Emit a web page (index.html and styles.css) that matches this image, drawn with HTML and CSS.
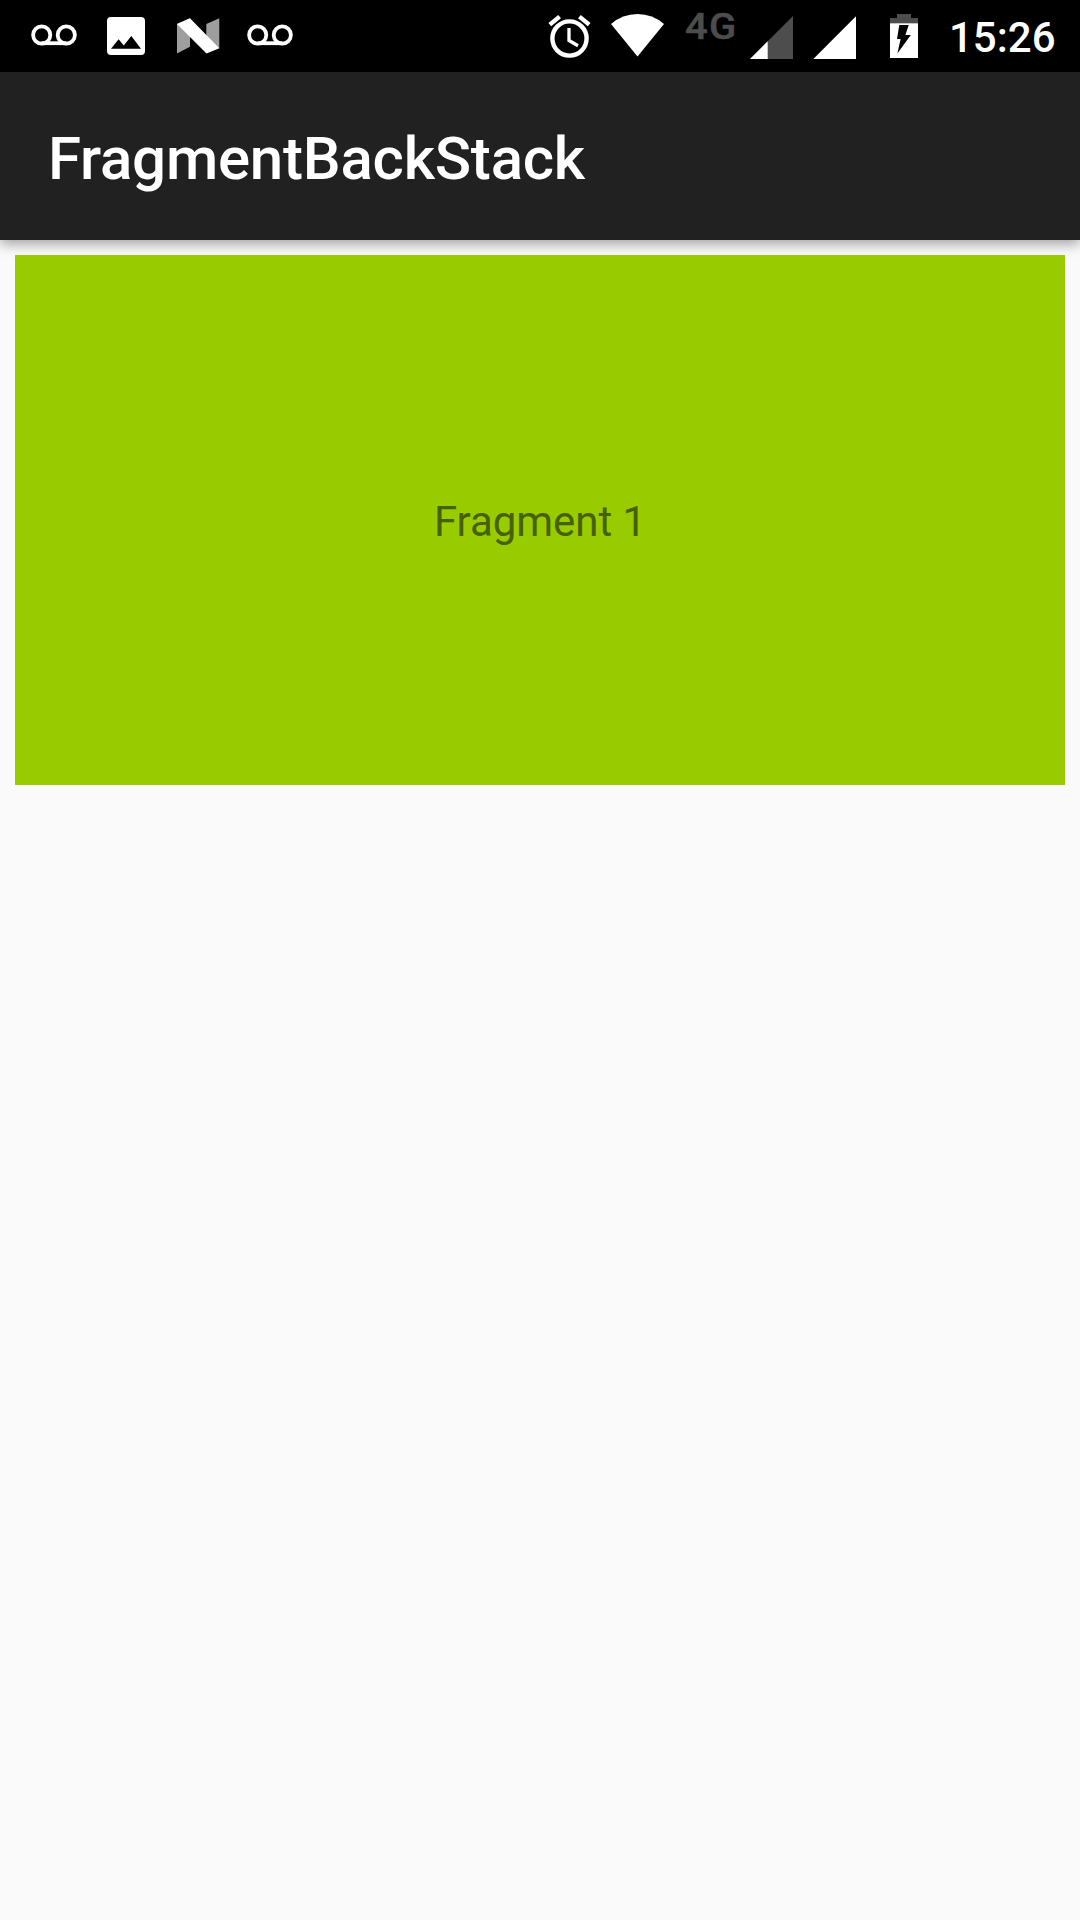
FILE: index.html
```html
<!DOCTYPE html>
<html lang="en">
<head>
<meta charset="utf-8">
<title>FragmentBackStack</title>
<link rel="stylesheet" href="styles.css">
</head>
<body>
<header class="status-bar">
  <div class="notifications">
    <svg class="icon" viewBox="18 0 72 72"><g class="tape"><circle cx="41.7" cy="35" r="8.6"/><circle cx="66.3" cy="35" r="8.6"/><path d="M41.7 43.2h24.6"/></g></svg>
    <svg class="icon" viewBox="90 0 72 72"><path fill-rule="evenodd" d="M111 17h30q4 0 4 4v30q0 4-4 4h-30q-4 0-4-4V21q0-4 4-4zM111 48.7h30l-9.7-12.6-7.5 9.4-5.2-6.3z"/></svg>
    <svg class="icon" viewBox="162 0 72 72"><path class="n-side" d="M177 24l13-5.7v28.5l-13 6.7zM206.3 24l13-5.7v30l-13-7z"/><path d="M177 24l13-5.7 29.3 30-12.8 5.2z"/></svg>
    <svg class="icon" viewBox="234 0 72 72"><g class="tape"><circle cx="257.7" cy="35" r="8.6"/><circle cx="282.3" cy="35" r="8.6"/><path d="M257.7 43.2h24.6"/></g></svg>
  </div>
  <div class="system">
    <svg class="alarm" viewBox="544 0 52 72"><circle cx="569.5" cy="38.5" r="17.1"/><path d="M569 28v12.5l9 5.2" class="hands"/><path d="M549.8 24.6l9.8-8M589.2 24.6l-9.8-8"/></svg>
    <svg class="wifi" viewBox="608 0 60 72"><path d="M611 24Q622.5 14 637.5 14T664 24L637.5 56.5z"/></svg>
    <span class="network">4G</span>
    <svg class="signal" viewBox="749 0 46 72"><path class="dim" d="M750 59l43-43v43z"/><path d="M750 59l17.7-17.7V59z"/></svg>
    <svg class="signal" viewBox="812 0 46 72"><path d="M813.3 59l42.7-42.7v42.7z"/></svg>
    <svg class="battery" viewBox="888 0 32 72"><path class="dim" d="M897 14h14v4h7v5.3h-28V18h7z"/><path fill-rule="evenodd" d="M890 23.3h28V58h-28zM899.3 25l-2.3 14h3.6l-3.2 14.5L910.8 35h-5.4l3.3-10z"/></svg>
    <time class="clock">15:26</time>
  </div>
</header>
<div class="app-bar"><h1 class="title">FragmentBackStack</h1></div>
<main class="content">
  <section class="fragment">Fragment 1</section>
</main>
</body>
</html>
```
FILE: styles.css
```css
body {
  display: flex;
  flex-direction: column;
  height: 1920px;
  margin: 0;
  background: #fafafa;
  font-family: Roboto, sans-serif;
}

.status-bar {
  display: flex;
  justify-content: space-between;
  height: 72px;
  padding: 0 24px 0 18px;
  background: #000;
  color: #fff;
}

.notifications,
.system {
  display: flex;
}

svg {
  display: block;
  height: 72px;
  fill: #fff;
}

.icon {
  width: 72px;
}

.tape {
  fill: none;
  stroke: #fff;
  stroke-width: 3.8;
}

.n-side {
  fill: #9e9e9e;
}

.alarm {
  width: 52px;
  margin-right: 12px;
  fill: none;
  stroke: #fff;
  stroke-width: 4.4;
}

.hands {
  stroke-width: 3.3;
}

.wifi {
  width: 60px;
  margin-right: 17px;
}

.network {
  width: 64px;
  color: #4d4d4d;
  font-size: 37px;
  font-weight: 500;
  line-height: 54px;
  letter-spacing: 1.3px;
  transform: scaleX(1.08);
  transform-origin: 0 0;
  -webkit-text-stroke: 0.5px #4d4d4d;
}

.signal {
  width: 46px;
  margin-right: 17px;
}

.dim {
  fill: #4d4d4d;
}

.battery {
  width: 32px;
  margin: 0 29px 0 13px;
}

.clock {
  width: 107px;
  font-size: 42px;
  font-weight: 500;
  line-height: 75px;
}

.app-bar {
  z-index: 1;
  display: flex;
  align-items: center;
  box-sizing: border-box;
  height: 168px;
  padding: 5px 0 0 48px;
  background: #212121;
  box-shadow: 0 4px 12px rgba(0, 0, 0, 0.36);
}

.title {
  margin: 0;
  color: #fff;
  font-size: 60px;
  font-weight: 500;
  line-height: 70px;
  letter-spacing: -0.22px;
}

.content {
  flex: 1;
  padding: 15px;
}

.fragment {
  display: flex;
  align-items: center;
  justify-content: center;
  box-sizing: border-box;
  height: 530px;
  padding-top: 2px;
  background: #9c0;
  color: #476000;
  font-size: 42px;
  letter-spacing: -0.05px;
}
```
